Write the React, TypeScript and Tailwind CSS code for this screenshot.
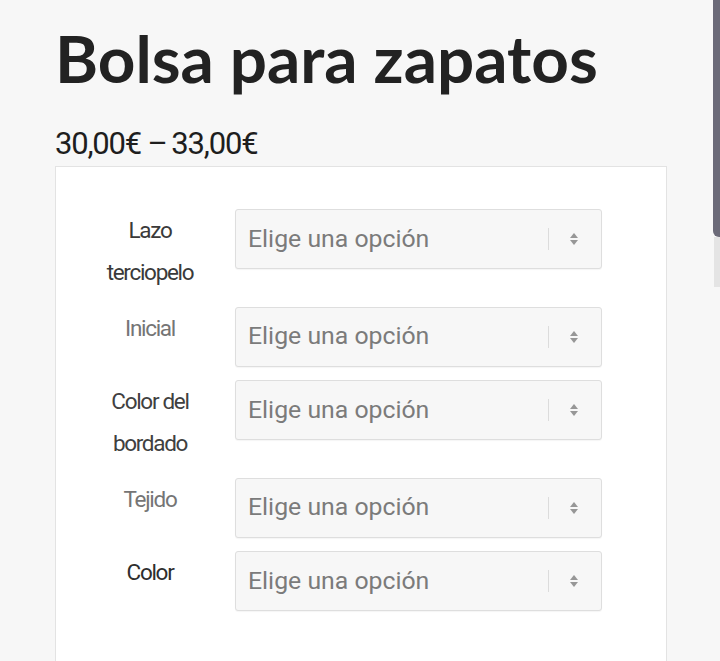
import React from "react";

const rows: { label: string[]; color: string }[] = [
  { label: ["Lazo", "terciopelo"], color: "text-[#3a3a3a]" },
  { label: ["Inicial"], color: "text-[#757575]" },
  { label: ["Color del", "bordado"], color: "text-[#404040]" },
  { label: ["Tejido"], color: "text-[#757575]" },
  { label: ["Color"], color: "text-[#2e2e2e]" },
];

function Arrows() {
  return (
    <svg width="12" height="16" viewBox="0 0 12 16" className="block">
      <path d="M2 7 L6 2 L10 7 Z" fill="#979797" />
      <path d="M2 9 L6 14 L10 9 Z" fill="#979797" />
    </svg>
  );
}

function Select() {
  return (
    <div className="relative flex h-[60px] w-[367px] shrink-0 items-center rounded-[3px] border border-[#dedede] bg-[#f7f7f7] pl-[12px] shadow-[0_1px_1px_rgba(0,0,0,0.04)]">
      <span
        className="text-[24.8px] leading-none text-[#7b7b7b]"
        style={{ fontFamily: "Roboto, 'Noto Sans', sans-serif" }}
      >
        Elige una opción
      </span>
      <div className="absolute left-[312px] top-[18px] h-[22px] w-px bg-[#dcdcdc]" />
      <div className="absolute right-[21px] top-[21px]">
        <Arrows />
      </div>
    </div>
  );
}

export default function App() {
  return (
    <div className="relative h-[661px] w-[720px] overflow-hidden bg-[#f7f7f7]">
      <h1
        className="pl-[55px] pt-[19px] text-[65.6px] font-bold leading-[78px] text-[#222222]"
        style={{ fontFamily: "Lato, 'Noto Sans', sans-serif" }}
      >
        Bolsa para zapatos
      </h1>
      <div
        className="mt-[28px] pl-[55px] text-[31px] leading-[37px] tracking-[-1.2px] text-[#1e1e1e]"
        style={{ fontFamily: "Roboto, 'Noto Sans', sans-serif" }}
      >
        30,00€ <span className="tracking-[-3px]">–</span> 33,00€
      </div>
      <div className="ml-[55px] mt-[4px] h-[600px] w-[612px] border border-[#e3e3e3] bg-white pt-[42px]">
        <div className="flex flex-col gap-[13.5px]">
          {rows.map((r, i) => (
            <div key={i} className="flex items-start">
              <div
                className={`ml-[44px] mr-[35px] w-[100px] shrink-0 text-center text-[22.5px] leading-[42px] tracking-[-1.3px] ${r.color}`}
                style={{ fontFamily: "Roboto, 'Noto Sans', sans-serif" }}
              >
                {r.label.map((l, j) => (
                  <div key={j} className="whitespace-nowrap">
                    {l}
                  </div>
                ))}
              </div>
              <Select />
            </div>
          ))}
        </div>
      </div>
      <div className="absolute right-0 top-0 h-[237px] w-[7px] rounded-bl-[6px] bg-[#6b6a78]" />
      <div className="absolute right-0 top-[237px] h-[50px] w-[6px] bg-[#e4e4e4]" />
    </div>
  );
}
